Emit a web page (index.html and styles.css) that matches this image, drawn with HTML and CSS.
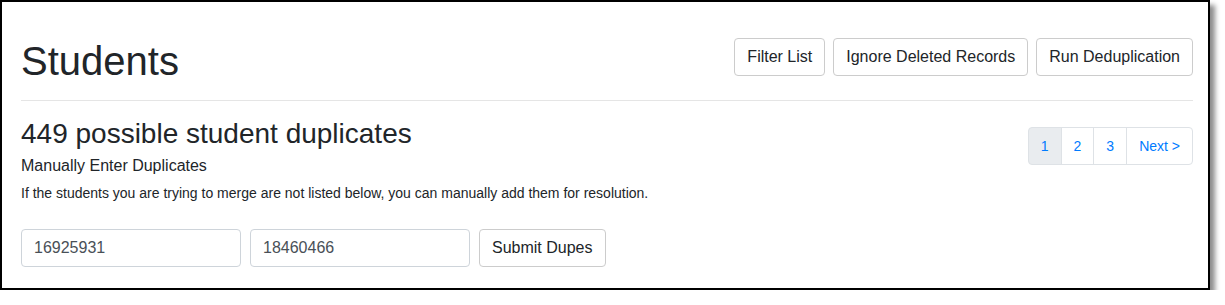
FILE: index.html
```html
<!DOCTYPE html>
<html lang="en">
  <head>
    <meta charset="UTF-8" />
    <meta name="viewport" content="width=device-width, initial-scale=1.0" />
    <title>Students || Deduplication</title>
    <link rel="stylesheet" href="styles.css">
  </head>
  <body>
    <div class="frame">
      <div class="page-header">
        <h1>Students</h1>
        <div class="actions">
          <button class="btn">Filter List</button>
          <button class="btn">Ignore Deleted Records</button>
          <button class="btn">Run Deduplication</button>
        </div>
      </div>
      <hr />

      <div class="summary">
        <div class="intro">
          <h3>449 possible student duplicates</h3>
          <h5>Manually Enter Duplicates</h5>
          <p class="hint">If the students you are trying to merge are not listed below, you can manually add them for resolution.</p>
        </div>
        <ul class="pagination">
          <li class="page active">1</li>
          <li class="page">2</li>
          <li class="page">3</li>
          <li class="page">Next &gt;</li>
        </ul>
      </div>

      <form class="dupes" action="">
        <input type="text" class="field" value="16925931" />
        <input type="text" class="field" value="18460466" />
        <input type="submit" class="btn" value="Submit Dupes" />
      </form>
    </div>
  </body>
</html>
```

FILE: styles.css
```css
body {
  margin: 0;
  background-color: #fff;
  font-family: "Liberation Sans", Arial, sans-serif;
  color: #212529;
}
.frame {
  box-sizing: border-box;
  width: 1210px;
  height: 290px;
  border: 2px solid #000;
  box-shadow: 5px 5px 5px rgba(0, 0, 0, 0.45);
  padding: 0 15px 0 19px;
}
.page-header {
  display: flex;
  justify-content: space-between;
  align-items: flex-start;
  padding-top: 35px;
}
h1 {
  margin: 0;
  font-size: 40px;
  font-weight: 400;
  line-height: 1.2;
}
.actions {
  display: flex;
  gap: 8px;
  margin-top: 1px;
}
.btn {
  font-family: inherit;
  font-size: 16px;
  line-height: 24px;
  padding: 6px 12px;
  color: #212529;
  background-color: #fff;
  border: 1px solid #ccc;
  border-radius: 4px;
  cursor: pointer;
}
hr {
  margin: 15px 0 0;
  border: 0;
  border-top: 1px solid rgba(0, 0, 0, 0.1);
}
.summary {
  display: flex;
  justify-content: space-between;
  align-items: flex-start;
}
h3 {
  margin: 16px 0 3px;
  font-size: 28px;
  font-weight: 400;
  line-height: 1.2;
}
h5 {
  margin: 0;
  font-size: 16px;
  font-weight: 400;
  line-height: 1.5;
}
.hint {
  margin: 5px 0 0;
  font-size: 14px;
  line-height: 1.5;
}
.pagination {
  display: flex;
  list-style: none;
  margin: 26px 0 0;
  padding: 0;
}
.page {
  font-size: 14px;
  line-height: 20px;
  padding: 8px 12px;
  color: #007bff;
  border: 1px solid #dee2e6;
  margin-left: -1px;
  cursor: pointer;
}
.page:first-child {
  margin-left: 0;
  border-radius: 4px 0 0 4px;
}
.page:last-child {
  border-radius: 0 4px 4px 0;
}
.page.active {
  background-color: #e9ecef;
}
.dupes {
  display: flex;
  gap: 9px;
  margin-top: 25px;
}
.field {
  box-sizing: border-box;
  width: 220px;
  height: 38px;
  font-family: inherit;
  font-size: 16px;
  padding: 6px 12px;
  color: #495057;
  border: 1px solid #ced4da;
  border-radius: 4px;
}
```
